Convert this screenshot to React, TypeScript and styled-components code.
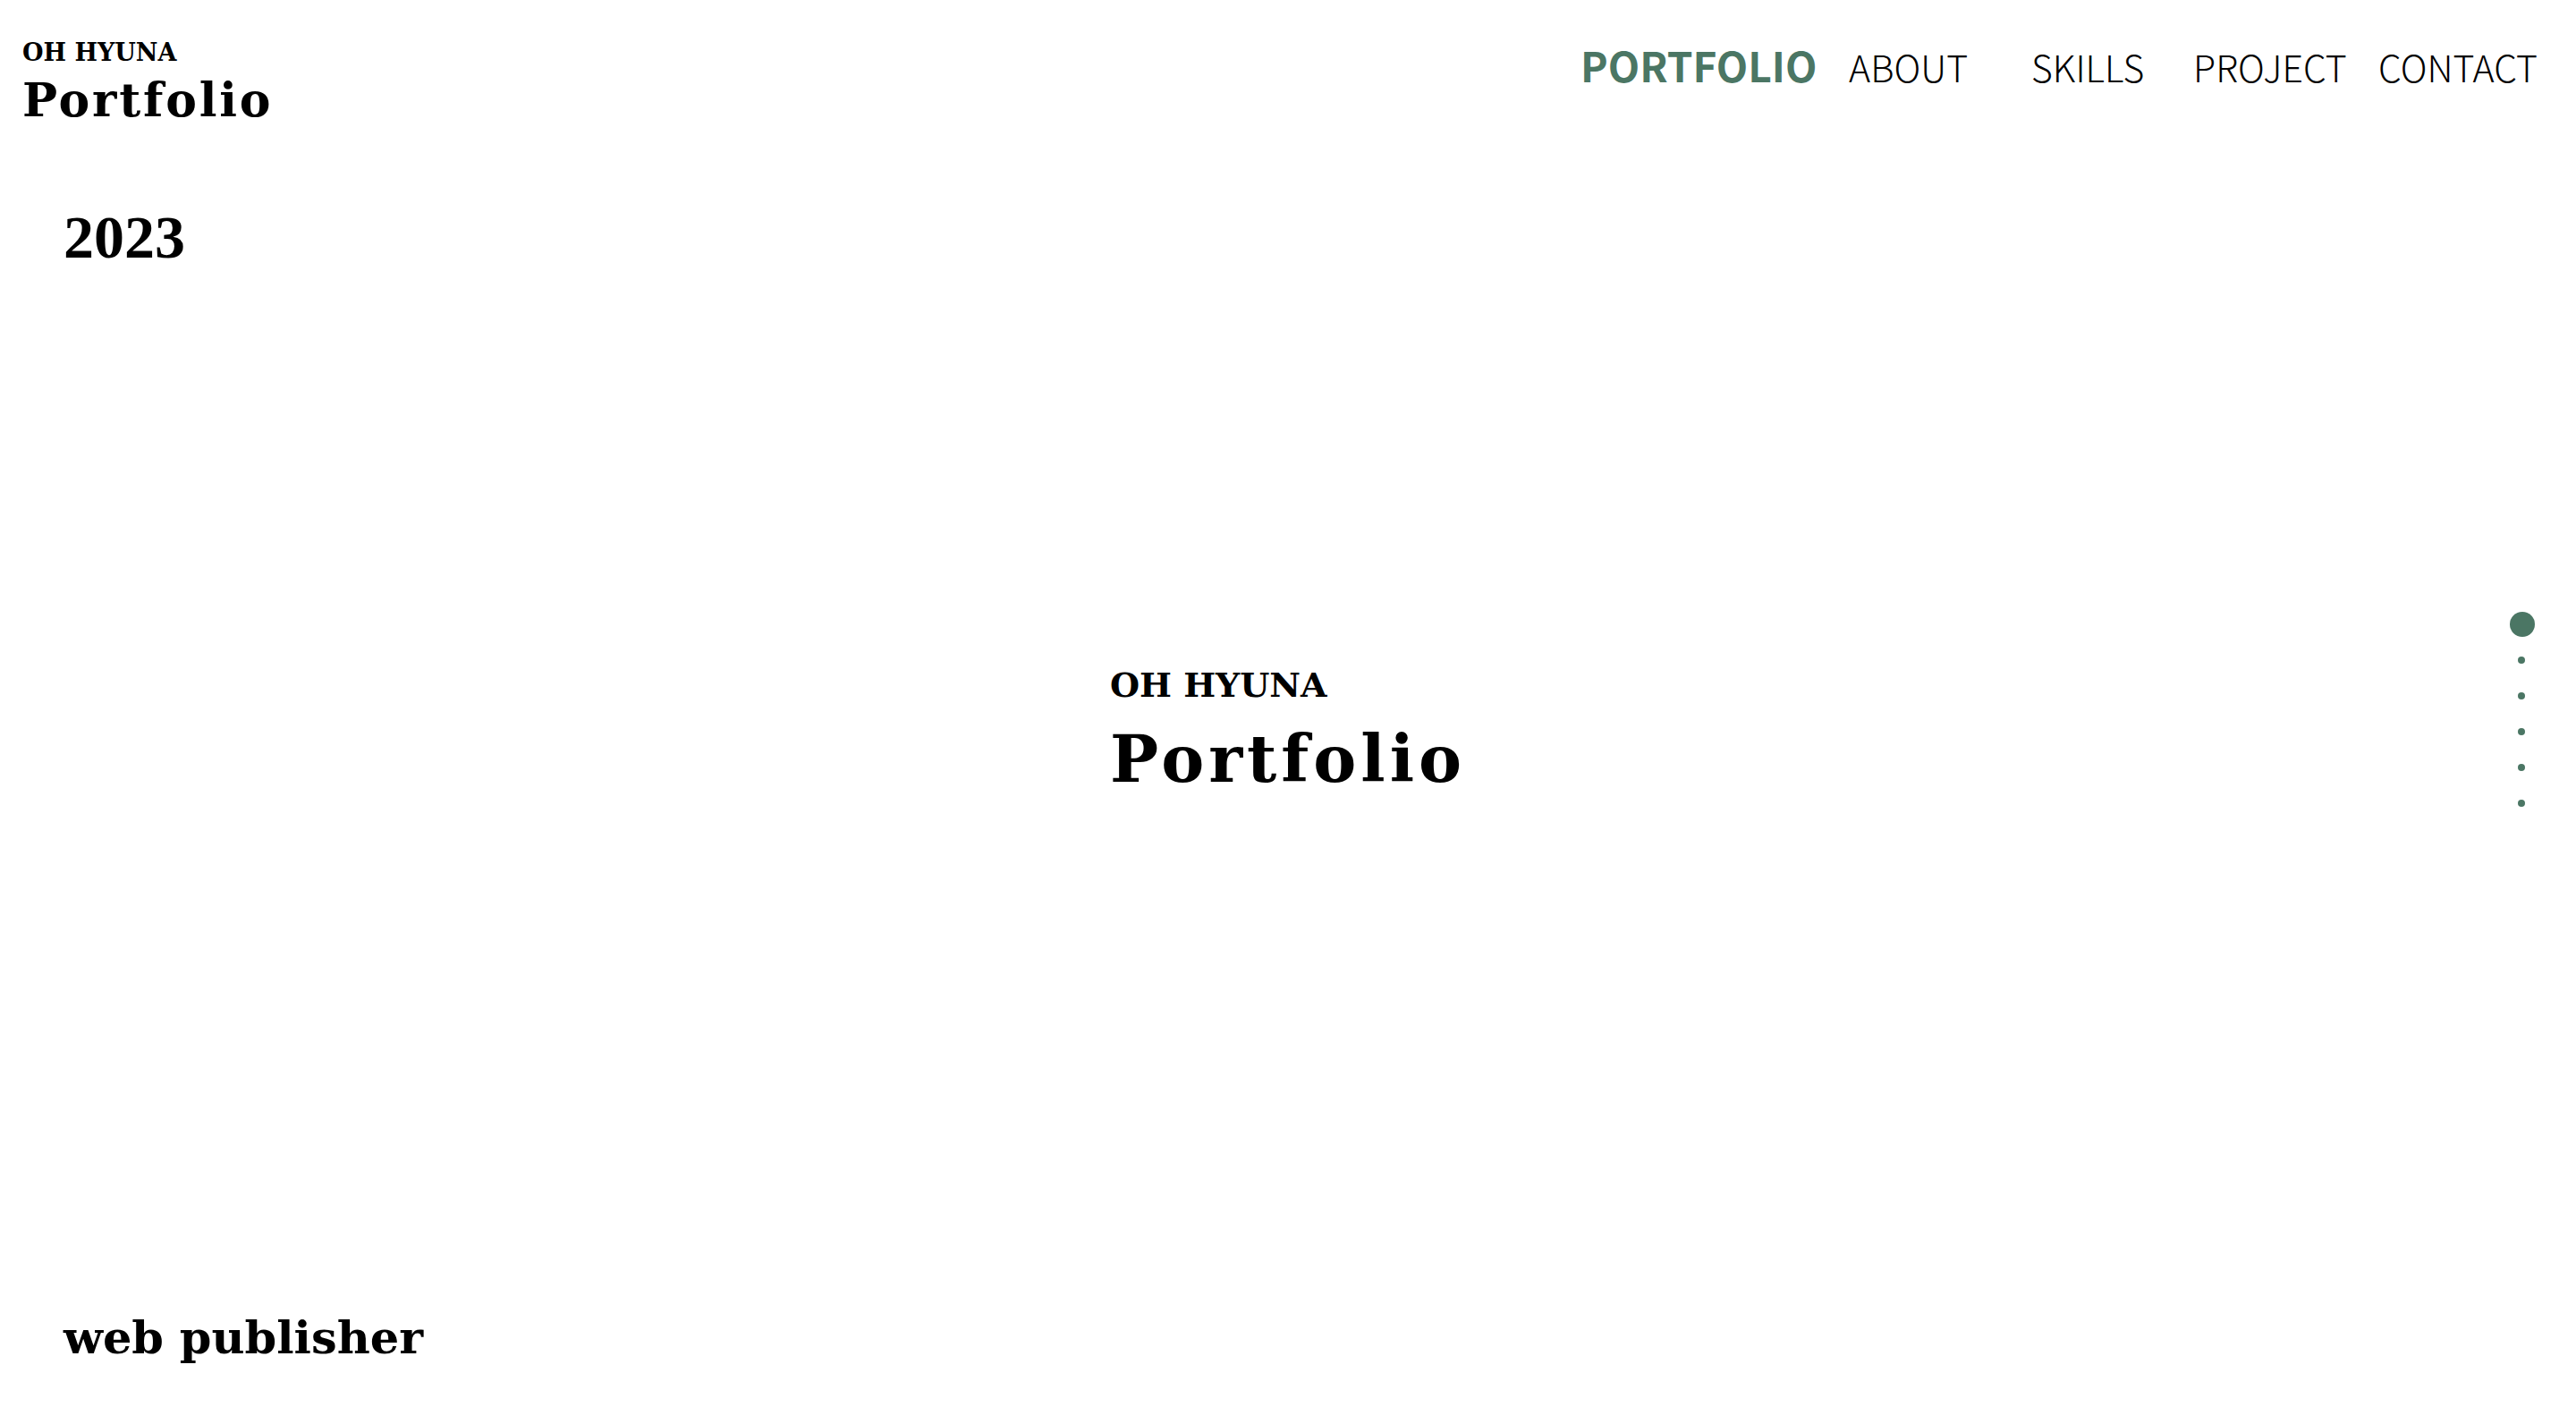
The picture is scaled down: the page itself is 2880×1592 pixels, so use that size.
import React from "react";
import styled, { createGlobalStyle } from "styled-components";

const GREEN = "#4b7664";
const SERIF = `"DejaVu Serif", "Liberation Serif", serif`;
const NUM_SERIF = `"Liberation Serif", "DejaVu Serif", serif`;
const SANS = `"Noto Sans CJK KR", "Noto Sans", sans-serif`;

const Global = createGlobalStyle`
  html, body { margin: 0; padding: 0; background: #ffffff; }
  body { color: #000; font-family: ${SANS}; }
  * { box-sizing: border-box; }
`;

const Page = styled.div`
  height: 100vh;
  display: grid;
  grid-template-rows: auto 1fr;
  overflow: hidden;
`;

const Header = styled.header`
  display: flex;
  justify-content: space-between;
  align-items: flex-start;
  padding: 0 0 0 25px;
`;

const Logo = styled.a`
  display: flex;
  flex-direction: column;
  color: #000;
  text-decoration: none;
  padding-top: 45px;
`;

const Kicker = styled.span<{ $size: number }>`
  font-family: ${SERIF};
  font-weight: 700;
  font-size: ${(p) => p.$size}px;
  line-height: 1;
`;

const Title = styled.span<{ $size: number; $spacing: number; $gap: number }>`
  font-family: ${SERIF};
  font-weight: 700;
  font-size: ${(p) => p.$size}px;
  line-height: 1;
  letter-spacing: ${(p) => p.$spacing}px;
  margin-top: ${(p) => p.$gap}px;
`;

const Nav = styled.nav`
  display: flex;
  align-items: baseline;
  padding-top: 49px;
  padding-right: 43px;
`;

const NavItem = styled.a<{ $w: number; $active?: boolean }>`
  width: ${(p) => p.$w}px;
  font-family: ${SANS};
  font-size: ${(p) => (p.$active ? 46 : 41)}px;
  font-weight: ${(p) => (p.$active ? 700 : 300)};
  color: ${(p) => (p.$active ? GREEN : "#000")};
  line-height: 1;
  text-decoration: none;
  white-space: nowrap;
  &:last-child { width: auto; }
`;

const Hero = styled.main`
  display: grid;
  grid-template-rows: auto 1fr auto;
  padding: 0 0 71px 71px;
`;

const Year = styled.h2`
  margin: 0;
  padding-top: 93px;
  font-family: ${NUM_SERIF};
  font-weight: 700;
  font-size: 68px;
  line-height: 1;
`;

const Center = styled.div`
  align-self: center;
  justify-self: center;
  display: flex;
  flex-direction: column;
  margin-left: -71px;
  margin-top: -138px;
`;

const Role = styled.p`
  margin: 0;
  font-family: ${SERIF};
  font-weight: 700;
  font-size: 51px;
  line-height: 1;
`;

const Dots = styled.ul`
  position: fixed;
  top: 678px;
  right: 47px;
  width: 28px;
  margin: 0;
  padding: 0;
  list-style: none;
  display: flex;
  flex-direction: column;
  align-items: center;
`;

const DotSlot = styled.li`
  height: 40px;
  display: flex;
  align-items: center;
  justify-content: center;
`;

const Dot = styled.span<{ $active?: boolean }>`
  display: block;
  width: ${(p) => (p.$active ? 28 : 8)}px;
  height: ${(p) => (p.$active ? 28 : 8)}px;
  border-radius: 50%;
  background: ${GREEN};
  margin-left: ${(p) => (p.$active ? 2 : 0)}px;
`;

const navItems = [
  { label: "PORTFOLIO", w: 300, active: true },
  { label: "ABOUT", w: 204 },
  { label: "SKILLS", w: 181 },
  { label: "PROJECT", w: 207 },
  { label: "CONTACT", w: 170 },
];

export default function App() {
  return (
    <>
      <Global />
      <Page>
        <Header>
          <Logo href="#">
            <Kicker $size={27}>OH HYUNA</Kicker>
            <Title $size={52} $spacing={2.8} $gap={14}>Portfolio</Title>
          </Logo>
          <Nav>
            {navItems.map((n) => (
              <NavItem key={n.label} href="#" $w={n.w} $active={n.active}>
                {n.label}
              </NavItem>
            ))}
          </Nav>
        </Header>
        <Hero>
          <Year>2023</Year>
          <Center>
            <Kicker $size={38}>OH HYUNA</Kicker>
            <Title $size={72} $spacing={5} $gap={28}>Portfolio</Title>
          </Center>
          <Role>web publisher</Role>
        </Hero>
      </Page>
      <Dots>
        {[true, false, false, false, false, false].map((a, i) => (
          <DotSlot key={i}>
            <Dot $active={a} />
          </DotSlot>
        ))}
      </Dots>
    </>
  );
}
